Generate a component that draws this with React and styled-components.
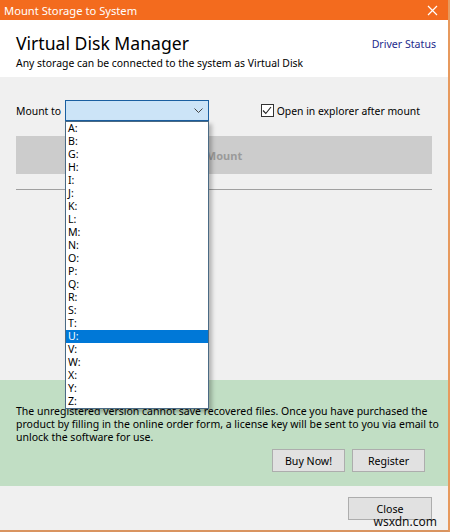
import React from 'react'
import styled, { createGlobalStyle } from 'styled-components'

const GlobalStyle = createGlobalStyle`
  body {
    margin: 0;
    font-family: "Noto Sans", "Open Sans", sans-serif;
    font-size: 10.4px;
    color: #000;
  }
`

const Window = styled.div`
  position: relative;
  width: 450px;
  height: 532px;
  box-sizing: border-box;
  display: flex;
  flex-direction: column;
  background: #f0f0f0;
  border-right: 2px solid #e79a5e;
  border-bottom: 2px solid #d99460;
  overflow: hidden;
`
const TitleBar = styled.div`
  height: 20px;
  flex-shrink: 0;
  display: flex;
  align-items: center;
  justify-content: space-between;
  padding: 0 10px 0 4px;
  background: #f36b1e;
  color: #fff;
  font-size: 11.2px;
`
const Header = styled.div`
  height: 57px;
  flex-shrink: 0;
  display: flex;
  justify-content: space-between;
  padding: 12px 12px 0 16px;
  box-sizing: border-box;
  background: #fff;
`
const HeadTitle = styled.h1`
  margin: 0;
  font-weight: 400;
  font-size: 17.6px;
  line-height: 23px;
`
const HeadSub = styled.p`
  margin: 1px 0 0;
  font-size: 10.4px;
  line-height: 14px;
`
const DriverLink = styled.a`
  margin-top: 5px;
  color: #232a8c;
  font-size: 10.6px;
  text-decoration: none;
`
const Body = styled.div`
  flex: 0 0 303px;
  padding: 0 16px;
`
const MountRow = styled.div`
  margin-top: 23px;
  height: 21px;
  display: flex;
  align-items: center;
`
const Label = styled.span`
  width: 49px;
`
const Select = styled.div`
  position: relative;
  width: 144px;
  height: 21px;
  box-sizing: border-box;
  border: 1px solid #1a5fa0;
  background: #cce4f7;
  z-index: 2;
`
const Chevron = styled.svg`
  position: absolute;
  right: 5px;
  top: 7px;
`
const DropList = styled.ul`
  position: absolute;
  left: -1px;
  top: 20px;
  width: 144px;
  margin: 0;
  padding: 0;
  list-style: none;
  box-sizing: border-box;
  background: #fff;
  border: 1px solid #4a6a84;
  box-shadow: 3px 3px 4px rgba(0, 0, 0, 0.25);
`
const DropItem = styled.li`
  height: 13px;
  line-height: 13px;
  padding-left: 2px;
  font-size: 10.6px;
  background: ${p => (p.selected ? '#0078d7' : 'transparent')};
  color: ${p => (p.selected ? '#fff' : '#000')};
`
const CheckLabel = styled.label`
  margin-left: auto;
  margin-right: 12px;
  display: flex;
  align-items: center;
  gap: 3px;
`
const CheckBox = styled.span`
  width: 11px;
  height: 11px;
  border: 1px solid #333;
  background: #fff;
  display: flex;
  align-items: center;
  justify-content: center;
`
const MountButton = styled.div`
  margin-top: 15px;
  height: 38px;
  display: flex;
  align-items: center;
  justify-content: center;
  background: #cccccc;
  color: #9a9a9a;
  font-weight: 700;
  font-size: 11px;
`
const Separator = styled.hr`
  margin: 15px 0 0;
  border: none;
  border-top: 1px solid #a0a0a0;
`
const Notice = styled.div`
  flex: 0 0 106px;
  box-sizing: border-box;
  padding: 25px 16px 0;
  background: #c1dec4;
`
const NoticeText = styled.p`
  margin: 0;
  font-size: 10.5px;
  line-height: 13px;
  white-space: nowrap;
`
const ButtonRow = styled.div`
  margin-top: 5px;
  display: flex;
  justify-content: flex-end;
  gap: 7px;
  padding-right: 7px;
`
const Button = styled.button`
  width: ${p => p.w || 73}px;
  height: 23px;
  border: 1px solid #adadad;
  background: #e1e1e1;
  font-family: inherit;
  font-size: 10.6px;
  color: #000;
  padding: 0;
`
const Footer = styled.div`
  flex: 1;
  display: flex;
  justify-content: flex-end;
  align-items: flex-start;
  padding: 11px 16px 0;
`
const Watermark = styled.span`
  position: absolute;
  right: 11px;
  bottom: 2px;
  font-size: 12px;
  line-height: 13px;
  color: #111;
`

const drives = ['A', 'B', 'G', 'H', 'I', 'J', 'K', 'L', 'M', 'N', 'O', 'P', 'Q', 'R', 'S', 'T', 'U', 'V', 'W', 'X', 'Y', 'Z']

const App = () => {
  return (
    <Window>
      <GlobalStyle />
      <TitleBar>
        <span>Mount Storage to System</span>
        <svg width="11" height="11" viewBox="0 0 11 11">
          <path d="M1 1L10 10M10 1L1 10" stroke="#fff" strokeWidth="1.2" />
        </svg>
      </TitleBar>
      <Header>
        <div>
          <HeadTitle>Virtual Disk Manager</HeadTitle>
          <HeadSub>Any storage can be connected to the system as Virtual Disk</HeadSub>
        </div>
        <DriverLink>Driver Status</DriverLink>
      </Header>
      <Body>
        <MountRow>
          <Label>Mount to</Label>
          <Select>
            <Chevron width="9" height="5" viewBox="0 0 9 5">
              <path d="M0.5 0.5L4.5 4.5L8.5 0.5" stroke="#444" fill="none" />
            </Chevron>
            <DropList>
              {drives.map(d => (
                <DropItem key={d} selected={d === 'U'}>{d}:</DropItem>
              ))}
            </DropList>
          </Select>
          <CheckLabel>
            <CheckBox>
              <svg width="10" height="9" viewBox="0 0 10 9">
                <path d="M1 4.5L3.8 7.5L9 1" stroke="#222" strokeWidth="1.1" fill="none" />
              </svg>
            </CheckBox>
            Open in explorer after mount
          </CheckLabel>
        </MountRow>
        <MountButton>Mount</MountButton>
        <Separator />
      </Body>
      <Notice>
        <NoticeText>
          The unregistered version cannot save recovered files. Once you have purchased the<br />
          product by filling in the online order form, a license key will be sent to you via email to<br />
          unlock the software for use.
        </NoticeText>
        <ButtonRow>
          <Button>Buy Now!</Button>
          <Button>Register</Button>
        </ButtonRow>
      </Notice>
      <Footer>
        <Button w={84}>Close</Button>
      </Footer>
      <Watermark>wsxdn.com</Watermark>
    </Window>
  )
}

export default App
